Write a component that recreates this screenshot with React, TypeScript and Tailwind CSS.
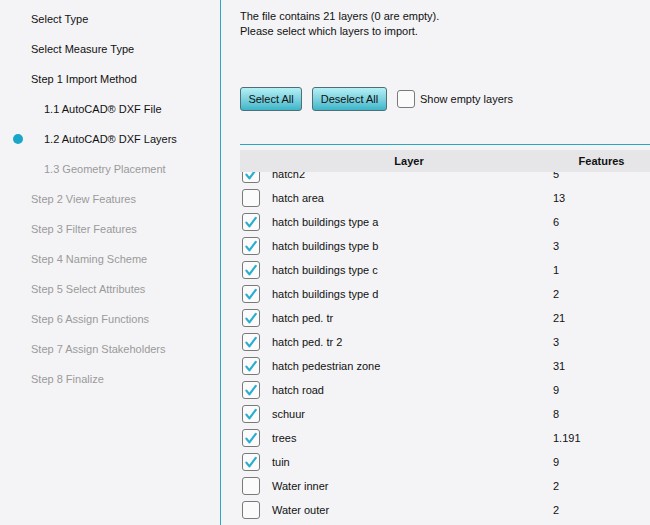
import React from "react";

const steps: { label: string; level: 0 | 1; state: "done" | "active" | "todo" }[] = [
  { label: "Select Type", level: 0, state: "done" },
  { label: "Select Measure Type", level: 0, state: "done" },
  { label: "Step 1 Import Method", level: 0, state: "done" },
  { label: "1.1 AutoCAD® DXF File", level: 1, state: "done" },
  { label: "1.2 AutoCAD® DXF Layers", level: 1, state: "active" },
  { label: "1.3 Geometry Placement", level: 1, state: "todo" },
  { label: "Step 2 View Features", level: 0, state: "todo" },
  { label: "Step 3 Filter Features", level: 0, state: "todo" },
  { label: "Step 4 Naming Scheme", level: 0, state: "todo" },
  { label: "Step 5 Select Attributes", level: 0, state: "todo" },
  { label: "Step 6 Assign Functions", level: 0, state: "todo" },
  { label: "Step 7 Assign Stakeholders", level: 0, state: "todo" },
  { label: "Step 8 Finalize", level: 0, state: "todo" },
];

const rows: { name: string; n: string; on: boolean }[] = [
  { name: "hatch2", n: "5", on: true },
  { name: "hatch area", n: "13", on: false },
  { name: "hatch buildings type a", n: "6", on: true },
  { name: "hatch buildings type b", n: "3", on: true },
  { name: "hatch buildings type c", n: "1", on: true },
  { name: "hatch buildings type d", n: "2", on: true },
  { name: "hatch ped. tr", n: "21", on: true },
  { name: "hatch ped. tr 2", n: "3", on: true },
  { name: "hatch pedestrian zone", n: "31", on: true },
  { name: "hatch road", n: "9", on: true },
  { name: "schuur", n: "8", on: true },
  { name: "trees", n: "1.191", on: true },
  { name: "tuin", n: "9", on: true },
  { name: "Water inner", n: "2", on: false },
  { name: "Water outer", n: "2", on: false },
];

function Check({ on }: { on: boolean }) {
  return (
    <div className="w-[18px] h-[18px] rounded-[3px] border border-[#7a7a7a] bg-[#fbfbfb] flex items-center justify-center shrink-0">
      {on && (
        <svg width="14" height="14" viewBox="0 0 14 14">
          <path d="M2.4 7.6 L5.4 11.4 L11.8 2.8" fill="none" stroke="#2aaed0" strokeWidth="2.2" strokeLinecap="round" strokeLinejoin="round" />
        </svg>
      )}
    </div>
  );
}

export default function App() {
  return (
    <div
      className="w-[650px] h-[525px] overflow-hidden flex bg-[#f4f4f6] text-[11px] text-[#111]"
      style={{ fontFamily: '"Liberation Sans", Arial, sans-serif' }}
    >
      <div className="w-[220px] shrink-0 pt-[4px]">
        {steps.map((s) => (
          <div
            key={s.label}
            className={
              "h-[30px] flex items-center " +
              (s.state === "todo" ? "text-[#9a9a9a] " : "text-[#111] ") +
              (s.level === 0 ? "pl-[31px]" : s.state === "active" ? "pl-[13px]" : "pl-[44px]")
            }
          >
            {s.state === "active" && (
              <span className="w-[10px] h-[10px] rounded-full bg-[#1aa6c8] mr-[21px]" />
            )}
            {s.label}
          </div>
        ))}
      </div>
      <div className="w-px bg-[#2aa6bf] shrink-0" />
      <div className="flex-1 pl-[19px] flex flex-col min-w-0">
        <div className="pt-[9px] leading-[15px]">
          <div>The file contains 21 layers (0 are empty).</div>
          <div>Please select which layers to import.</div>
        </div>
        <div className="mt-[48px] flex items-center h-[24px]">
          <button className="h-[24px] w-[62px] rounded-[3px] border border-[#4f6f76] bg-gradient-to-b from-[#b4f0f6] to-[#3ab6c9] text-[11px] text-[#111]">
            Select All
          </button>
          <button className="ml-[10px] h-[24px] w-[75px] rounded-[3px] border border-[#4f6f76] bg-gradient-to-b from-[#b4f0f6] to-[#3ab6c9] text-[11px] text-[#111]">
            Deselect All
          </button>
          <div className="ml-[10px]">
            <Check on={false} />
          </div>
          <span className="ml-[5px]">Show empty layers</span>
        </div>
        <div className="mt-[33px] h-px bg-[#2aa6bf]" />
        <div className="mt-[5px] h-[22px] bg-[#e6e6e9] flex items-center font-bold">
          <div className="w-[25px]" />
          <div className="w-[288px] text-center">Layer</div>
          <div className="flex-1 text-center">Features</div>
        </div>
        <div className="flex-1 overflow-hidden">
          <div className="-mt-[10px]">
            {rows.map((r) => (
              <div key={r.name} className="h-[24px] flex items-center">
                <div className="w-[32px] pl-[2px]">
                  <Check on={r.on} />
                </div>
                <div className="w-[281px]">{r.name}</div>
                <div>{r.n}</div>
              </div>
            ))}
          </div>
        </div>
      </div>
    </div>
  );
}
